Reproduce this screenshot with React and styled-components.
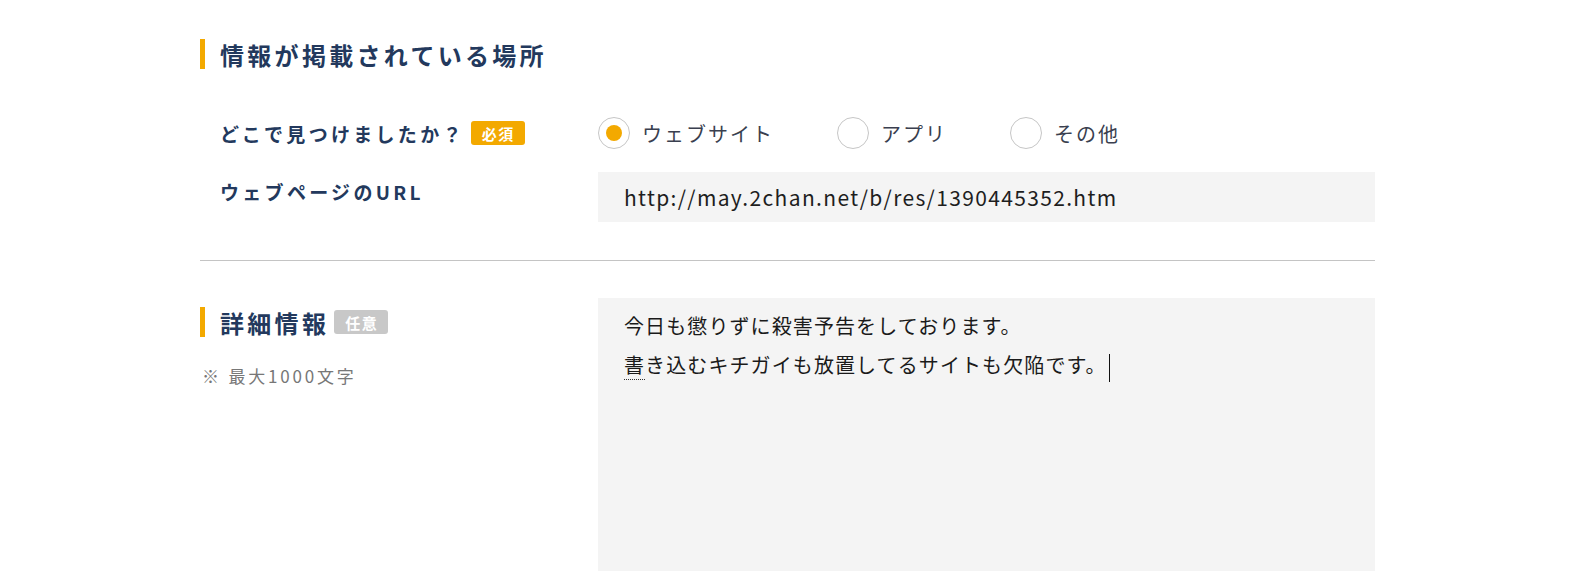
import React from "react";
import styled, {createGlobalStyle} from "styled-components";

const GlobalStyle = createGlobalStyle`
  body {
    margin: 0;
    background: #ffffff;
    font-family: "Noto Sans CJK JP", "Noto Sans", sans-serif;
  }
`;

const Page = styled.div`
  width: 1175px;
  margin-left: 200px;
  padding-top: 39px;
`;

const Section = styled.section`
  padding-bottom: ${(p) => p.$pb || 0}px;
`;

const Heading = styled.h2`
  display: flex;
  align-items: center;
  margin: 0;
  height: 30px;
  padding-left: 15px;
  border-left: 5px solid #f3a900;
  font-size: 24px;
  font-weight: 700;
  letter-spacing: 3.3px;
  color: #23395d;
`;

const Row = styled.div`
  display: grid;
  grid-template-columns: 398px 777px;
  align-items: ${(p) => p.$align || "center"};
  margin-top: ${(p) => p.$mt || 0}px;
`;

const Label = styled.div`
  display: flex;
  align-items: center;
  padding-left: 20px;
  padding-top: ${(p) => p.$pt || 0}px;
  font-size: 19px;
  font-weight: 700;
  letter-spacing: 3.3px;
  color: #23395d;
`;

const Badge = styled.span`
  display: inline-flex;
  align-items: center;
  justify-content: center;
  height: 24px;
  padding: 0 10px 0 11px;
  margin-left: ${(p) => p.$ml || 6}px;
  border-radius: 3px;
  background: ${(p) => (p.$required ? "#f3a900" : "#c8c8c8")};
  color: #ffffff;
  font-size: 15px;
  font-weight: 700;
  letter-spacing: 1.5px;
`;

const RadioGroup = styled.div`
  display: flex;
  align-items: center;
`;

const RadioOption = styled.label`
  display: flex;
  align-items: center;
  margin-right: 63px;
  font-size: 20px;
  letter-spacing: 2px;
  color: #3a3f4f;
`;

const RadioCircle = styled.span`
  display: flex;
  align-items: center;
  justify-content: center;
  width: 30px;
  height: 30px;
  margin-right: 12px;
  border: 1px solid #c6c6c6;
  border-radius: 50%;
  background: #ffffff;

  &::after {
    content: "";
    display: ${(p) => (p.$checked ? "block" : "none")};
    width: 16px;
    height: 16px;
    border-radius: 50%;
    background: #f3a900;
  }
`;

const TextBox = styled.div`
  display: flex;
  align-items: center;
  height: 50px;
  padding: 0 26px;
  background: #f4f4f4;
  font-size: 21px;
  letter-spacing: 1.35px;
  color: #1e1e1e;
`;

const Divider = styled.hr`
  margin: 0;
  border: none;
  border-top: 1px solid #c4c4c4;
`;

const SideColumn = styled.div`
  display: flex;
  flex-direction: column;
  padding-top: 9px;
`;

const Note = styled.p`
  margin: 26px 0 0 2px;
  font-size: 17px;
  letter-spacing: 2.8px;
  color: #777777;
`;

const TextArea = styled.div`
  height: 273px;
  box-sizing: border-box;
  padding: 8px 26px;
  background: #f4f4f4;
  font-size: 20px;
  line-height: 39px;
  letter-spacing: 1.1px;
  color: #1a1a1a;
`;

const Composing = styled.span`
  border-bottom: 1px dotted #333333;
`;

const Caret = styled.span`
  display: inline-block;
  width: 1px;
  height: 28px;
  margin-left: 2px;
  vertical-align: middle;
  background: #111111;
`;

const options = [
    {label: "ウェブサイト", checked: true},
    {label: "アプリ", checked: false},
    {label: "その他", checked: false},
];

const App = () => {
    return (
        <>
            <GlobalStyle/>
            <Page>
                <Section $pb={38}>
                    <Heading>情報が掲載されている場所</Heading>

                    <Row $mt={48}>
                        <Label>
                            どこで見つけましたか？
                            <Badge $required>必須</Badge>
                        </Label>
                        <RadioGroup>
                            {options.map((o) => (
                                <RadioOption key={o.label}>
                                    <RadioCircle $checked={o.checked}/>
                                    {o.label}
                                </RadioOption>
                            ))}
                        </RadioGroup>
                    </Row>

                    <Row $mt={23} $align="start">
                        <Label $pt={6}>ウェブページのURL</Label>
                        <TextBox>http://may.2chan.net/b/res/1390445352.htm</TextBox>
                    </Row>
                </Section>

                <Divider/>

                <Row $mt={37} $align="start">
                    <SideColumn>
                        <Heading>
                            詳細情報
                            <Badge $ml={5}>任意</Badge>
                        </Heading>
                        <Note>※ 最大1000文字</Note>
                    </SideColumn>
                    <TextArea>
                        今日も懲りずに殺害予告をしております。
                        <br/>
                        <Composing>書</Composing>き込むキチガイも放置してるサイトも欠陥です。<Caret/>
                    </TextArea>
                </Row>
            </Page>
        </>
    );
};

export default App;
